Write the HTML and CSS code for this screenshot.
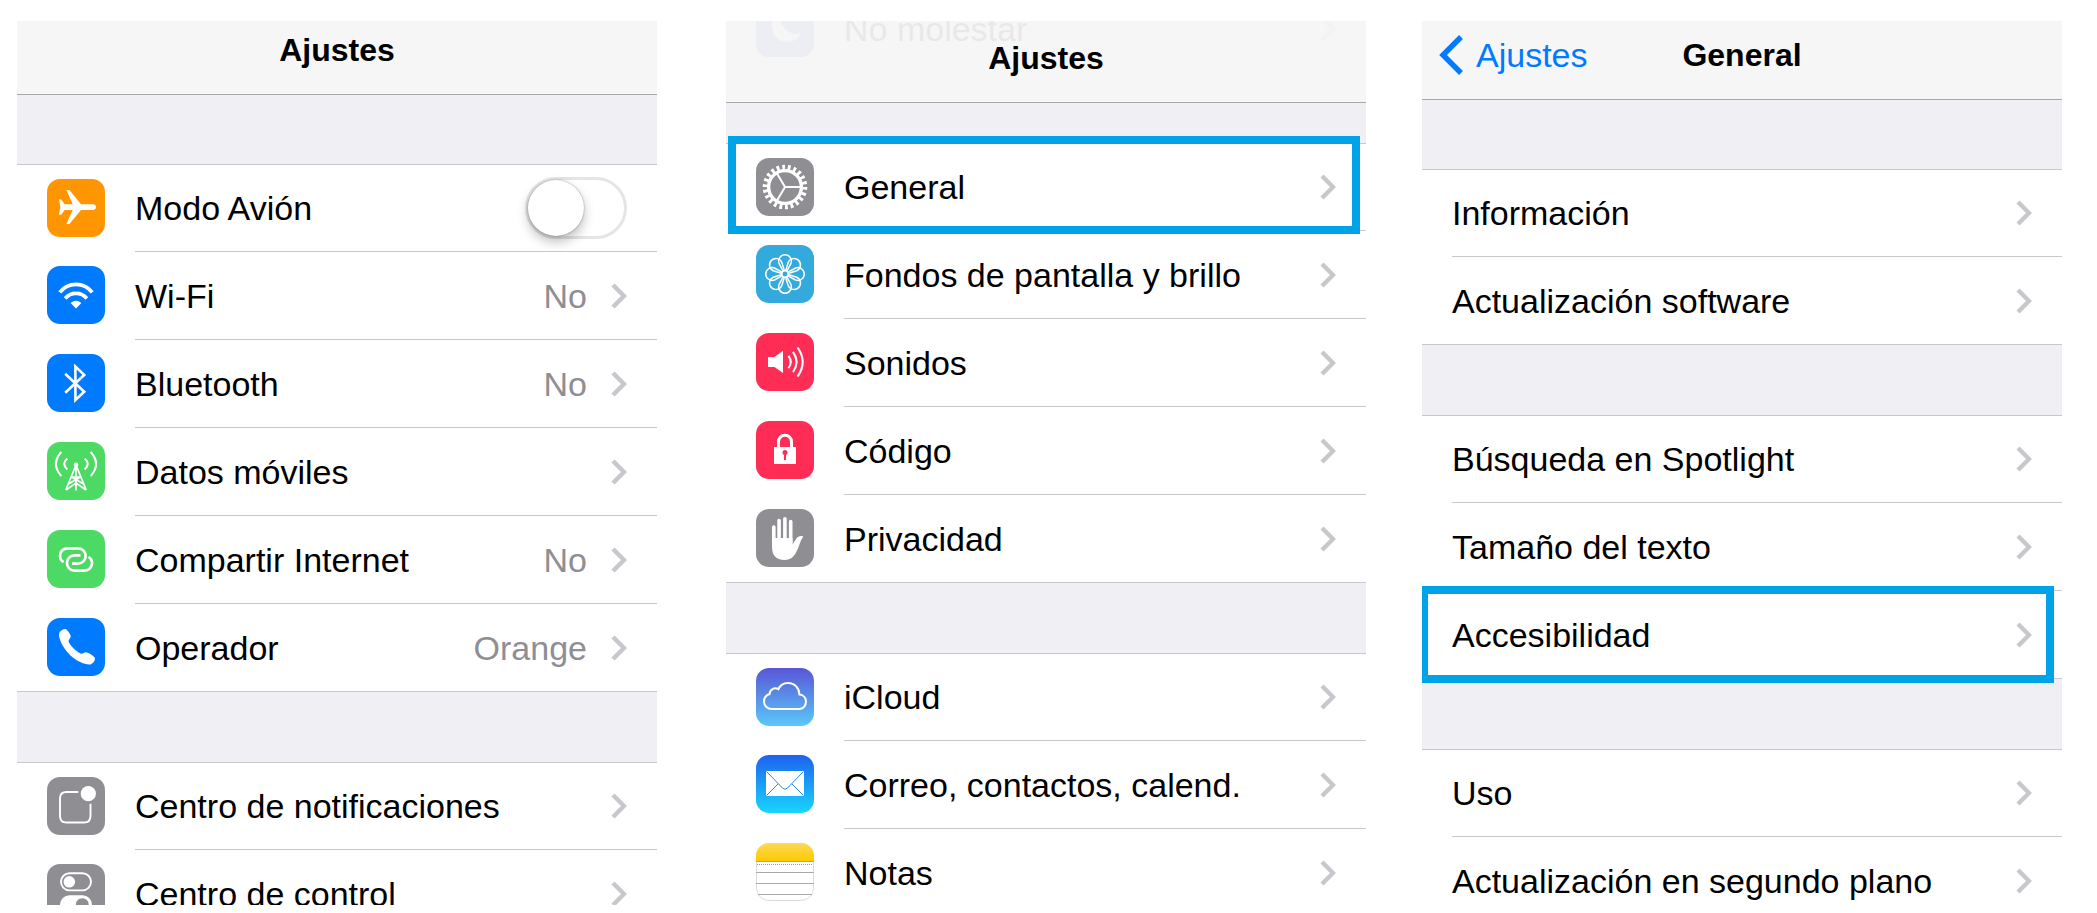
FILE: index.html
```
<!DOCTYPE html>
<html lang="es">
<head>
  <meta charset="UTF-8" />
  <meta name="viewport" content="width=device-width, initial-scale=1" />
  <title>Ajustes</title>
  <link rel="stylesheet" href="styles.css">
</head>
<body>

  <!-- shared shapes -->
  <svg class="defs" aria-hidden="true">
    <symbol id="chevron" viewBox="0 0 16 26">
      <path d="M2 2L13 13 2 24" fill="none" stroke="#c7c7cc" stroke-width="4.4" />
    </symbol>
    <linearGradient id="cloudBg" x1="0" y1="0" x2="0" y2="1">
      <stop offset="0" stop-color="#5856d6" />
      <stop offset="1" stop-color="#5ac8fa" />
    </linearGradient>
    <linearGradient id="mailBg" x1="0" y1="0" x2="0" y2="1">
      <stop offset="0" stop-color="#1d62f0" />
      <stop offset="1" stop-color="#1ad5fd" />
    </linearGradient>
    <linearGradient id="notesBg" x1="0" y1="0" x2="0" y2="1">
      <stop offset="0" stop-color="#fdd956" />
      <stop offset="1" stop-color="#fdca00" />
    </linearGradient>
    <path id="petal" d="M27.3 26.5L23 18.4A6.4 6.4 0 1 1 35 18.4L30.7 26.5" />
  </svg>

  <!-- Ajustes -->
  <section class="screen">
    <header class="nav nav-short">
      <h1>Ajustes</h1>
    </header>
    <ul class="group">
      <li class="row">
        <svg class="icon" viewBox="0 0 58 58">
          <rect width="58" height="58" rx="13" fill="#ff9500" />
          <path fill="#fff" d="M12 20.5h2.2l3.5 4.7h8L19.4 11h3L34 25.2h12c1.8 0 3 1.2 3 2.9s-1.2 2.9-3 2.9H34L22.4 45h-3l6.3-14h-8l-3.5 4.7H12l1.4-7.6z" />
        </svg>
        <div class="cell">
          <label class="label" for="airplane">Modo Avión</label>
          <input class="switch" type="checkbox" id="airplane" />
        </div>
      </li>
      <li class="row">
        <svg class="icon" viewBox="0 0 58 58">
          <rect width="58" height="58" rx="13" fill="#007aff" />
          <g fill="none" stroke="#fff" stroke-width="3.8">
            <path d="M12.8 26.3A20.5 20.5 0 0 1 45.2 26.3" />
            <path d="M18.2 32.5A14 14 0 0 1 39.8 32.5" />
          </g>
          <path fill="#fff" d="M23.6 37Q29 32.6 34.4 37L29 42.6z" />
        </svg>
        <a class="cell" href="#">
          <span class="label">Wi-Fi</span>
          <span class="value">No</span>
          <svg class="chevron"><use href="#chevron" /></svg>
        </a>
      </li>
      <li class="row">
        <svg class="icon" viewBox="0 0 58 58">
          <rect width="58" height="58" rx="13" fill="#007aff" />
          <path fill="none" stroke="#fff" stroke-width="2.6" d="M18.2 19.7L37.2 37.7 28.4 46V12.6L37.2 20.9 18.2 38.7" />
        </svg>
        <a class="cell" href="#">
          <span class="label">Bluetooth</span>
          <span class="value">No</span>
          <svg class="chevron"><use href="#chevron" /></svg>
        </a>
      </li>
      <li class="row">
        <svg class="icon" viewBox="0 0 58 58">
          <rect width="58" height="58" rx="13" fill="#4cd964" />
          <circle cx="29" cy="22.7" r="2.3" fill="#fff" />
          <g fill="none" stroke="#fff" stroke-width="1.7">
            <path d="M29 23L18.8 48M29 23L39.2 48M29 23V48.5M25 35H33M21.5 42L33.5 35M36.5 42L24.5 35M19 48L29 41 39 48" />
          </g>
          <g fill="none" stroke="#fff" stroke-width="2.1">
            <path d="M14.3 10Q3.5 22 14.3 34M20.3 16.5Q14.3 22 20.3 27.5" />
            <path d="M43.7 10Q54.5 22 43.7 34M37.7 16.5Q43.7 22 37.7 27.5" />
          </g>
        </svg>
        <a class="cell" href="#">
          <span class="label">Datos móviles</span>
          <svg class="chevron"><use href="#chevron" /></svg>
        </a>
      </li>
      <li class="row">
        <svg class="icon" viewBox="0 0 58 58">
          <rect width="58" height="58" rx="13" fill="#4cd964" />
          <g fill="none" stroke="#fff" stroke-width="2.6">
            <path d="M16.5 32.2C10.5 28.4 12.5 18.4 21 18.4H31C41.2 18.4 41.2 33.6 31 33.6H25" />
            <path d="M41.5 26.8C47.5 30.6 45.5 40.6 37 40.6H27.5C17.5 40.6 17.5 25.4 27.5 25.4H33.5" />
          </g>
        </svg>
        <a class="cell" href="#">
          <span class="label">Compartir Internet</span>
          <span class="value">No</span>
          <svg class="chevron"><use href="#chevron" /></svg>
        </a>
      </li>
      <li class="row">
        <svg class="icon" viewBox="0 0 58 58">
          <rect width="58" height="58" rx="13" fill="#007aff" />
          <path fill="#fff" d="M12 15.5C13 12.5 16 11 18.5 11 20 11.5 23 15.5 23.8 18 23.8 20 21.5 21.5 21.5 23.5 23.5 28 29 33.5 34 35.8 36 36 37 34.3 39 34.3 42 35 46 37.5 47.8 39.5 48.3 42 47 45 43.5 46.4 38 47 29 43 23 37 16 30 11.5 21 12 15.5z" />
        </svg>
        <a class="cell" href="#">
          <span class="label">Operador</span>
          <span class="value">Orange</span>
          <svg class="chevron"><use href="#chevron" /></svg>
        </a>
      </li>
    </ul>
    <ul class="group">
      <li class="row">
        <svg class="icon" viewBox="0 0 58 58">
          <rect width="58" height="58" rx="13" fill="#8e8e93" />
          <path fill="none" stroke="#fff" stroke-width="1.9" d="M31.3 15H19.5Q13 15 13 21.5V39Q13 45.5 19.5 45.5H37Q43.5 45.5 43.5 39V26.7" />
          <circle cx="41.3" cy="16.7" r="7.6" fill="#fff" />
        </svg>
        <a class="cell" href="#">
          <span class="label">Centro de notificaciones</span>
          <svg class="chevron"><use href="#chevron" /></svg>
        </a>
      </li>
      <li class="row">
        <svg class="icon" viewBox="0 0 58 58">
          <rect width="58" height="58" rx="13" fill="#8e8e93" />
          <rect x="14" y="9.2" width="30" height="17.2" rx="8.6" fill="none" stroke="#fff" stroke-width="1.9" />
          <circle cx="22.3" cy="17.8" r="5.8" fill="#fff" />
          <rect x="13" y="31.2" width="32" height="19" rx="9.5" fill="#fff" />
          <circle cx="35.3" cy="40.7" r="6.5" fill="#8e8e93" />
        </svg>
        <a class="cell" href="#">
          <span class="label">Centro de control</span>
          <svg class="chevron"><use href="#chevron" /></svg>
        </a>
      </li>
    </ul>
  </section>

  <!-- Ajustes, scrolled down -->
  <section class="screen screen-scrolled">
    <header class="nav nav-tall">
      <div class="under-nav">
        <svg class="icon" viewBox="0 0 58 58">
          <rect width="58" height="58" rx="13" fill="#5856d6" />
          <path fill="#fff" d="M22 14C13 20 14 36 24 41 32 45 42 42 45 34 36 38 24 30 22 14z" />
        </svg>
        <div class="cell">
          <span class="label">No molestar</span>
          <svg class="chevron"><use href="#chevron" /></svg>
        </div>
      </div>
      <h1>Ajustes</h1>
    </header>
    <ul class="group">
      <li class="row highlight">
        <svg class="icon" viewBox="0 0 58 58">
          <rect width="58" height="58" rx="13" fill="#8e8e93" />
          <g fill="none" stroke="#fff">
            <circle cx="29" cy="29" r="16.4" stroke-width="3.4" />
            <circle cx="29" cy="29" r="19.8" stroke-width="5" pathLength="44" stroke-dasharray="1 1" />
            <path stroke-width="2" d="M29 29H44M29 29L21 15.5M29 29L21 42.5" />
          </g>
        </svg>
        <a class="cell" href="#">
          <span class="label">General</span>
          <svg class="chevron"><use href="#chevron" /></svg>
        </a>
      </li>
      <li class="row">
        <svg class="icon" viewBox="0 0 58 58">
          <rect width="58" height="58" rx="13" fill="#34aadc" />
          <g fill="none" stroke="#fff" stroke-width="1.5">
            <use href="#petal" />
            <use href="#petal" transform="rotate(45 29 29)" />
            <use href="#petal" transform="rotate(90 29 29)" />
            <use href="#petal" transform="rotate(135 29 29)" />
            <use href="#petal" transform="rotate(180 29 29)" />
            <use href="#petal" transform="rotate(225 29 29)" />
            <use href="#petal" transform="rotate(270 29 29)" />
            <use href="#petal" transform="rotate(315 29 29)" />
            <circle cx="29" cy="29" r="3.2" />
          </g>
        </svg>
        <a class="cell" href="#">
          <span class="label">Fondos de pantalla y brillo</span>
          <svg class="chevron"><use href="#chevron" /></svg>
        </a>
      </li>
      <li class="row">
        <svg class="icon" viewBox="0 0 58 58">
          <rect width="58" height="58" rx="13" fill="#ff2d55" />
          <path fill="#fff" d="M12 24H18.5L27 17.8V40L18.5 34H12z" />
          <g fill="none" stroke="#fff" stroke-width="2.1">
            <path d="M32.5 22.8Q37 29 32.5 35.2M37 18.8Q44.2 29 37 39.2M41.6 14.5Q51.8 29 41.6 43.5" />
          </g>
        </svg>
        <a class="cell" href="#">
          <span class="label">Sonidos</span>
          <svg class="chevron"><use href="#chevron" /></svg>
        </a>
      </li>
      <li class="row">
        <svg class="icon" viewBox="0 0 58 58">
          <rect width="58" height="58" rx="13" fill="#ff2d55" />
          <path fill="none" stroke="#fff" stroke-width="3" d="M22.5 27V20.7a6.5 6.5 0 0 1 13 0V27" />
          <rect x="18" y="26" width="22" height="17" fill="#fff" />
          <circle cx="29" cy="31.4" r="2.5" fill="#ff2d55" />
          <path stroke="#ff2d55" stroke-width="2" d="M29 32V39" />
        </svg>
        <a class="cell" href="#">
          <span class="label">Código</span>
          <svg class="chevron"><use href="#chevron" /></svg>
        </a>
      </li>
      <li class="row">
        <svg class="icon" viewBox="0 0 58 58">
          <rect width="58" height="58" rx="13" fill="#8e8e93" />
          <g stroke="#fff" stroke-width="3.6" stroke-linecap="round">
            <path d="M17.8 18V34M23.1 11.6V34M28.9 9.8V34M34.7 12.6V34" />
          </g>
          <path fill="#fff" d="M16 29H36.5V35.5C38.5 33 39.5 30 41.5 28.3 43.5 27 45.5 26.6 47 27.2 47 29 45.8 29.6 45 31.5 43.5 35 42.5 39 40.3 43 38 48 34 51 28.5 51 20 51 16 46 16 38z" />
        </svg>
        <a class="cell" href="#">
          <span class="label">Privacidad</span>
          <svg class="chevron"><use href="#chevron" /></svg>
        </a>
      </li>
    </ul>
    <ul class="group">
      <li class="row">
        <svg class="icon" viewBox="0 0 58 58">
          <rect width="58" height="58" rx="13" fill="url(#cloudBg)" />
          <path fill="none" stroke="#fff" stroke-width="2" d="M16 41C11 41 8 37.5 8 33.5 8 29.7 10.5 27 13.6 26 13.6 21.5 18.5 18.8 22.4 21.2 24 17.5 28 15 32 15 38.6 15 43.4 20 43.4 26.6 47.5 27 50 30 50 33.8 50 38 47 41 43 41z" />
        </svg>
        <a class="cell" href="#">
          <span class="label">iCloud</span>
          <svg class="chevron"><use href="#chevron" /></svg>
        </a>
      </li>
      <li class="row">
        <svg class="icon" viewBox="0 0 58 58">
          <rect width="58" height="58" rx="13" fill="url(#mailBg)" />
          <rect x="10" y="16" width="38" height="25" fill="#fff" />
          <path fill="none" stroke="#2488f5" d="M10.5 16.5L26.5 33Q29 35.5 31.5 33L47.5 16.5M10.5 40.5L22 29M47.5 40.5L36 29" />
        </svg>
        <a class="cell" href="#">
          <span class="label">Correo, contactos, calend.</span>
          <svg class="chevron"><use href="#chevron" /></svg>
        </a>
      </li>
      <li class="row">
        <svg class="icon" viewBox="0 0 58 58">
          <rect x=".5" y=".5" width="57" height="57" rx="12.5" fill="#fff" stroke="#dcdcdc" />
          <path fill="url(#notesBg)" d="M0 18V13A13 13 0 0 1 13 0H45A13 13 0 0 1 58 13V18z" />
          <path stroke="#b9a565" d="M0 18.5H58" />
          <path stroke="#999" stroke-dasharray="1 1" d="M1 21.5H57" />
          <path stroke="#aaa" d="M0 29.5H58M0 40.5H58M2 51.5H56" />
        </svg>
        <a class="cell" href="#">
          <span class="label">Notas</span>
          <svg class="chevron"><use href="#chevron" /></svg>
        </a>
      </li>
    </ul>
  </section>

  <!-- General -->
  <section class="screen">
    <header class="nav">
      <a class="back" href="#">
        <svg class="back-arrow" viewBox="0 0 24 40">
          <path d="M22 2L4 20 22 38" fill="none" stroke="#007aff" stroke-width="5.4" />
        </svg>
        Ajustes
      </a>
      <h1>General</h1>
    </header>
    <ul class="group">
      <li class="row">
        <a class="cell" href="#">
          <span class="label">Información</span>
          <svg class="chevron"><use href="#chevron" /></svg>
        </a>
      </li>
      <li class="row">
        <a class="cell" href="#">
          <span class="label">Actualización software</span>
          <svg class="chevron"><use href="#chevron" /></svg>
        </a>
      </li>
    </ul>
    <ul class="group">
      <li class="row">
        <a class="cell" href="#">
          <span class="label">Búsqueda en Spotlight</span>
          <svg class="chevron"><use href="#chevron" /></svg>
        </a>
      </li>
      <li class="row">
        <a class="cell" href="#">
          <span class="label">Tamaño del texto</span>
          <svg class="chevron"><use href="#chevron" /></svg>
        </a>
      </li>
      <li class="row highlight highlight-edge">
        <a class="cell" href="#">
          <span class="label">Accesibilidad</span>
          <svg class="chevron"><use href="#chevron" /></svg>
        </a>
      </li>
    </ul>
    <ul class="group">
      <li class="row">
        <a class="cell" href="#">
          <span class="label">Uso</span>
          <svg class="chevron"><use href="#chevron" /></svg>
        </a>
      </li>
      <li class="row">
        <a class="cell" href="#">
          <span class="label">Actualización en segundo plano</span>
          <svg class="chevron"><use href="#chevron" /></svg>
        </a>
      </li>
    </ul>
  </section>

</body>
</html>
```

FILE: styles.css
```
* {
  box-sizing: border-box;
}
body {
  display: flex;
  height: 100vh;
  margin: 0;
  padding: 21px 35px 8px 17px;
  background: #fff;
  color: #000;
  font-family: "Helvetica Neue", Helvetica, "Liberation Sans", Arial, sans-serif;
  font-size: 34px;
  line-height: 40px;
}
.defs {
  position: absolute;
  width: 0;
  height: 0;
}
.screen {
  flex: 1;
  min-width: 0;
  overflow: hidden;
}
.screen-scrolled {
  margin: 0 56px 0 69px;
}

/* navigation bar */
.nav {
  position: relative;
  display: grid;
  grid-template-columns: 1fr auto 1fr;
  align-items: end;
  height: 79px;
  padding: 0 17px 24px;
  overflow: hidden;
  background: #f6f6f6;
  border-bottom: 1px solid #a7a7aa;
}
.nav-short {
  height: 74px;
}
.nav-tall {
  height: 82px;
}
.nav h1 {
  grid-column: 2;
  margin: 0;
  font-size: 32px;
  font-weight: bold;
}
.back {
  display: flex;
  align-items: center;
  gap: 13px;
  height: 40px;
  color: #007aff;
  text-decoration: none;
}
.back-arrow {
  width: 24px;
  height: 40px;
}

/* lists */
.group {
  margin: 0;
  padding: 0;
  list-style: none;
  background: #fff;
  border-top: 70px solid #efeff4;
}
.nav + .group {
  border-top-width: 69px;
}
.nav-tall + .group {
  border-top-width: 40px;
}
.row,
.under-nav {
  position: relative;
  display: flex;
  align-items: center;
  gap: 30px;
  height: 88px;
  padding-left: 30px;
}
/* row that shows faintly through the bar */
.under-nav {
  position: absolute;
  top: -36px;
  left: 0;
  right: 0;
  opacity: 0.05;
}
.group .row:first-child {
  border-top: 1px solid #c8c7cc;
}
.group .row:last-child {
  border-bottom: 1px solid #c8c7cc;
}
.cell {
  display: flex;
  flex: 1;
  align-items: center;
  align-self: stretch;
  min-width: 0;
  padding-right: 30px;
  color: inherit;
  text-decoration: none;
}
.group .row:not(:last-child) .cell {
  border-bottom: 1px solid #c8c7cc;
}
.icon {
  flex: none;
  width: 58px;
  height: 58px;
  margin-bottom: 2px;
}
.label {
  flex: 1;
  white-space: nowrap;
}
.value {
  color: #8e8e93;
}
.chevron {
  flex: none;
  width: 16px;
  height: 26px;
  margin-left: 24px;
}

/* blue frame round a row */
.highlight::after {
  content: "";
  position: absolute;
  z-index: 1;
  inset: -8px 6px -3px 2px;
  border: 8px solid #00a2e8;
  pointer-events: none;
}
.highlight-edge::after {
  inset: -5px 8px -5px -2px;
}

/* on/off switch */
.switch {
  flex: none;
  width: 102px;
  height: 62px;
  margin: 0;
  appearance: none;
  background: #fff;
  border: 3px solid #e5e5e5;
  border-radius: 31px;
  cursor: pointer;
}
.switch::before {
  content: "";
  display: block;
  width: 56px;
  height: 56px;
  background: #fff;
  border-radius: 50%;
  box-shadow: 0 0 2px rgba(0, 0, 0, 0.4), 0 6px 12px rgba(0, 0, 0, 0.25);
}
.switch:checked {
  background: #4cd964;
  border-color: #4cd964;
}
.switch:checked::before {
  margin-left: 40px;
}
```
